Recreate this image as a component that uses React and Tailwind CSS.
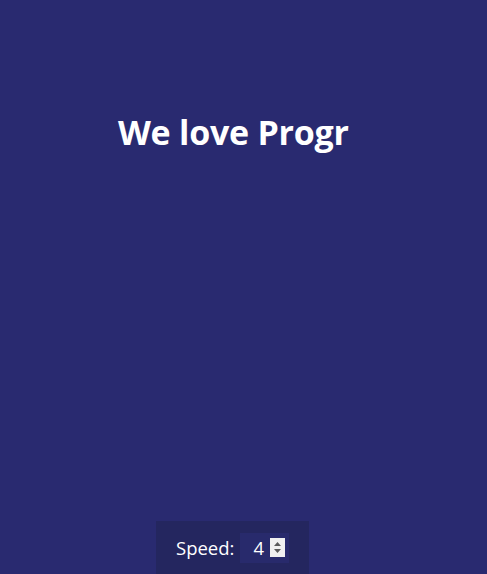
import React, { useState } from "react";

const Spinner = () => (
  <div className="flex flex-col w-[15px] h-[19px] bg-[#f0f0f0] items-center justify-center gap-[3px]">
    <svg width="7" height="4" viewBox="0 0 7 4">
      <path d="M0 4 L3.5 0 L7 4 Z" fill="#5a5a5a" />
    </svg>
    <svg width="7" height="4" viewBox="0 0 7 4">
      <path d="M0 0 L3.5 4 L7 0 Z" fill="#5a5a5a" />
    </svg>
  </div>
);

const App = () => {
  const [speed] = useState(4);

  return (
    <div
      className="h-[574px] w-full flex flex-col bg-[#292a70] text-white overflow-hidden"
      style={{ fontFamily: '"Open Sans", "Noto Sans", sans-serif' }}
    >
      <div className="pt-[108px] pl-[118px]">
        <h1 className="text-[34px] font-bold leading-[48px] tracking-[-0.25px]">
          We love Progr
        </h1>
      </div>

      <div className="mt-auto self-start ml-[156px] w-[153px] h-[53px] bg-[#24265f] flex items-center pl-[20px] gap-[6px]">
        <label className="text-[18.5px]">Speed:</label>
        <div className="w-[49px] h-[30px] bg-[#282a6c] flex items-center pl-[13px] pr-[4px] justify-between">
          <span className="text-[18.5px]">{speed}</span>
          <Spinner />
        </div>
      </div>
    </div>
  );
};

export default App;
